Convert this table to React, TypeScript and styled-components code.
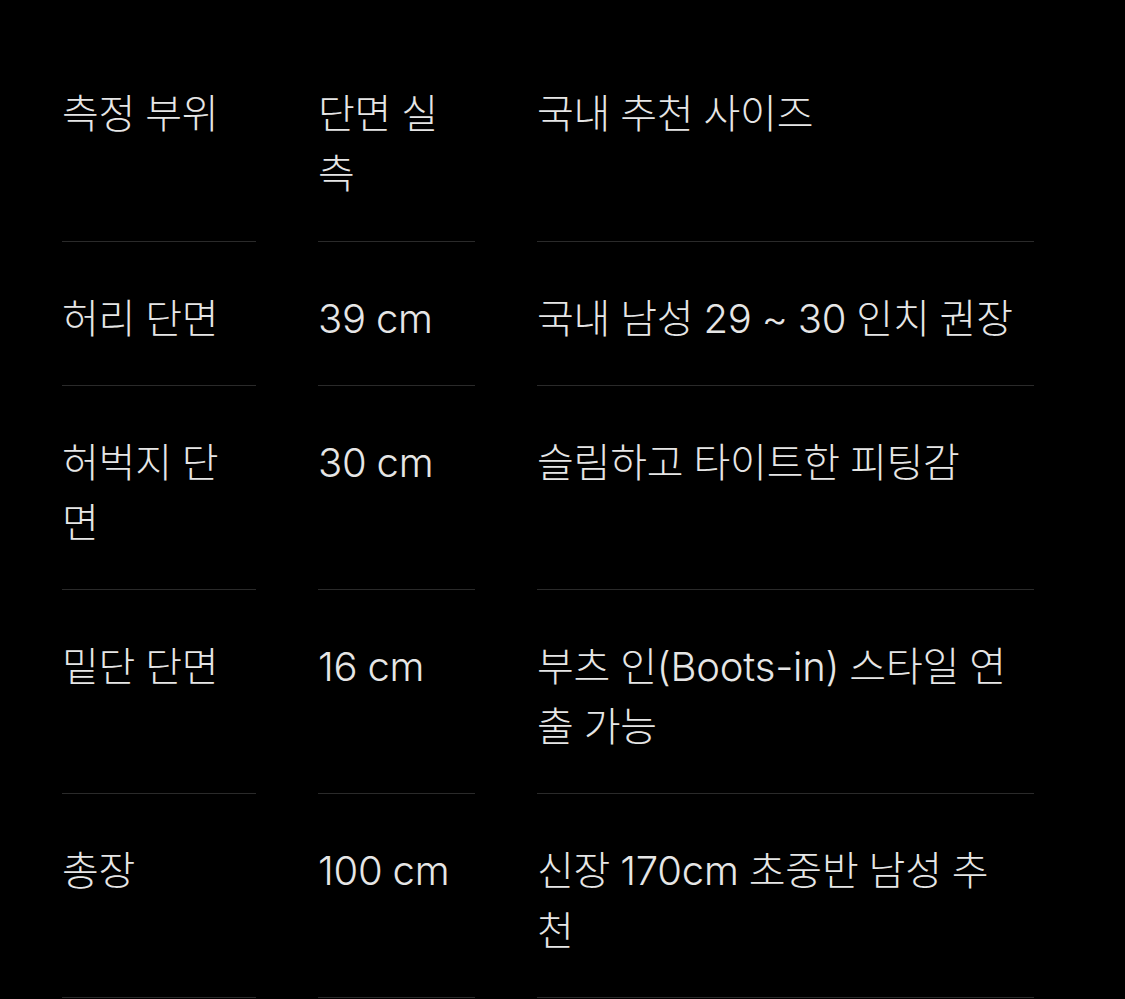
import styled, { createGlobalStyle } from "styled-components";

const GlobalStyle = createGlobalStyle`
  html, body {
    margin: 0;
    padding: 0;
    background: #000000;
  }
  body {
    font-family: "Inter", "Noto Sans CJK KR", "Noto Sans", sans-serif;
    color: #e6e6e6;
  }
`;

const rows = [
  { part: "측정 부위", size: "단면 실측", note: "국내 추천 사이즈" },
  { part: "허리 단면", size: "39 cm", note: "국내 남성 29 ~ 30 인치 권장" },
  { part: "허벅지 단면", size: "30 cm", note: "슬림하고 타이트한 피팅감" },
  { part: "밑단 단면", size: "16 cm", note: "부츠 인(Boots-in) 스타일 연출 가능" },
  { part: "총장", size: "100 cm", note: "신장 170cm 초중반 남성 추천" },
];

export default function App() {
  return (
    <>
      <GlobalStyle />
      <Page>
        <SizeTable>
          {rows.map((row, i) => (
            <Row key={row.part} $head={i === 0}>
              <Cell>{row.part}</Cell>
              <Cell>{row.size}</Cell>
              <Cell>{row.note}</Cell>
            </Row>
          ))}
        </SizeTable>
      </Page>
    </>
  );
}

const Page = styled.div`
  width: 1125px;
  min-height: 999px;
  box-sizing: border-box;
  padding: 37px 0 0 62px;
  background: #000000;
`;

const SizeTable = styled.div`
  display: flex;
  flex-direction: column;
`;

const Row = styled.div<{ $head: boolean }>`
  display: grid;
  grid-template-columns: 194px 157px 497px;
  column-gap: 62px;

  & > div {
    padding-bottom: ${(p) => (p.$head ? "37px" : "36px")};
  }
`;

const Cell = styled.div`
  box-sizing: border-box;
  padding: 47px 12px 36px 0;
  font-size: 40px;
  font-weight: 300;
  line-height: 60px;
  letter-spacing: -0.2px;
  word-spacing: -1px;
  border-bottom: 1px solid #2a2a2a;
  word-break: break-all;
`;
